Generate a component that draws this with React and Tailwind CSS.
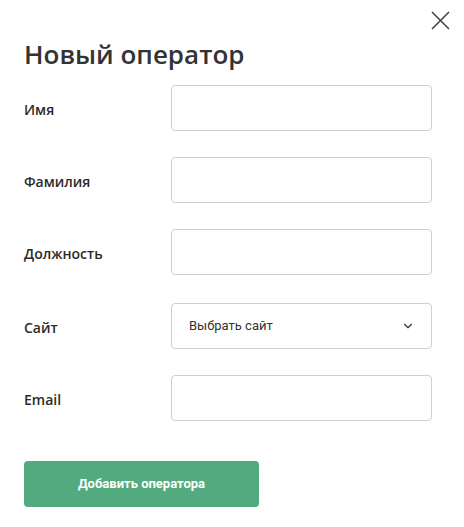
import { ChevronDown } from 'lucide-react';

const fields = ['Имя', 'Фамилия', 'Должность'];

const Field = ({ label, children, className = '' }) => (
  <div className={`flex items-center ${className}`}>
    <label className="w-[147px] shrink-0 pt-[3px] text-[14px] font-semibold text-[#2b2b2b]">{label}</label>
    {children}
  </div>
);

const App = () => {
  return (
    <div className="relative w-[464px] h-[527px] bg-white font-['Open_Sans',sans-serif]">
      <button className="absolute left-[430px] top-[10px] text-[#444]">
        <svg width="21" height="21" viewBox="0 0 21 21" fill="none" stroke="currentColor" strokeWidth="1.6">
          <path d="M2 2 L19 19 M19 2 L2 19" />
        </svg>
      </button>

      <div className="pl-[24px] pr-[32px] pt-[36px]">
        <h1 className="text-[26px] leading-[36px] font-semibold text-[#333]">Новый оператор</h1>

        <div className="mt-[13px] flex flex-col">
          {fields.map((f, i) => (
            <Field key={f} label={f} className={i > 0 ? 'mt-[26px]' : ''}>
              <input className="w-[261px] h-[46px] rounded-[4px] border border-[#cfcfcf] px-[16px] outline-none" />
            </Field>
          ))}

          <Field label="Сайт" className="mt-[28px]">
            <div className="w-[261px] h-[46px] rounded-[4px] border border-[#cfcfcf] flex items-center justify-between pl-[17px] pr-[16px] font-['Roboto',sans-serif] text-[13px] text-[#333]">
              <span>Выбрать сайт</span>
              <ChevronDown className="w-[14px] h-[14px] text-[#333]" strokeWidth={2} />
            </div>
          </Field>

          <Field label="Email" className="mt-[26px]">
            <input className="w-[261px] h-[46px] rounded-[4px] border border-[#cfcfcf] px-[16px] outline-none" />
          </Field>
        </div>

        <button className="mt-[40px] w-[235px] h-[46px] rounded-[4px] bg-[#52aa7e] text-white text-[13px] font-bold font-['Roboto',sans-serif]">
          Добавить оператора
        </button>
      </div>
    </div>
  );
};

export default App;
